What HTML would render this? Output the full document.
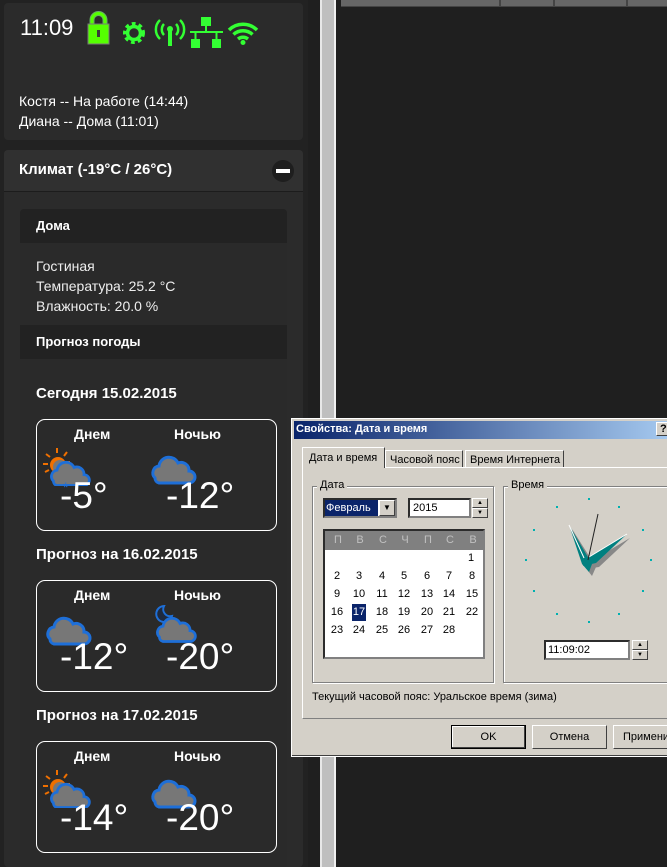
<!DOCTYPE html>
<html><head><meta charset="utf-8"><style>
*{margin:0;padding:0;box-sizing:border-box}
body{width:667px;height:867px;background:#1f1f1f;position:relative;overflow:hidden;font-family:"Liberation Sans",sans-serif;color:#fff}
.a{position:absolute}
.w{font-family:"Liberation Sans",sans-serif;font-size:11px;color:#000}
.bx{border:1px solid #fff;border-radius:9px}
.fc{font-weight:bold;font-size:15px}
.dl{font-weight:bold;font-size:14px}
.tp{font-size:37px}
.cal span{position:absolute;width:20px;text-align:center;font-size:11px}
.btn{background:#d4d0c8;border:1px solid #fff;border-right-color:#404040;border-bottom-color:#404040}
</style></head><body>
<!-- left column -->
<div class="a" style="left:0;top:0;width:308px;height:867px;background:#222"></div>
<div class="a" style="left:4px;top:3px;width:299px;height:137px;background:#2b2b2b;border-radius:4px"></div>
<div class="a" style="left:20px;top:15px;font-size:22px">11:09</div>
<svg class="a" style="left:80px;top:10px" width="190" height="45" viewBox="80 10 190 45">
<path d="M92 24v-4a6.5 6.5 0 0 1 13 0v4" fill="none" stroke="#6a6" stroke-width="5"/>
<path d="M92 24v-4a6.5 6.5 0 0 1 13 0v4" fill="none" stroke="#5f0" stroke-width="3"/>
<rect x="88" y="24" width="21" height="20" fill="#5f0" stroke="#777" stroke-width="1"/>
<rect x="97" y="30" width="3" height="7" fill="#3a3a3a"/>
<g fill="#3f3" stroke="#3f3">
<circle cx="134" cy="33" r="8.5" fill="none" stroke-width="5" stroke-dasharray="3.4 2.9"/>
<circle cx="134" cy="33" r="6.5" fill="none" stroke-width="3.5"/>
<path d="M170 31v15" stroke-width="4"/>
<circle cx="170" cy="29" r="3" stroke="none"/>
<path d="M164 24a8 8 0 0 0 0 11M176 24a8 8 0 0 1 0 11M160 20a13 13 0 0 0 0 19M180 20a13 13 0 0 1 0 19" fill="none" stroke-width="2.5"/>
<rect x="201" y="17" width="10" height="9" stroke="none"/>
<rect x="191" y="39" width="9" height="9" stroke="none"/>
<rect x="212" y="39" width="9" height="9" stroke="none"/>
<path d="M206 26v6M190 32h33M195.5 32v7M216.5 32v7" fill="none" stroke-width="2"/>
<path d="M229 30a20 20 0 0 1 28 0M233.5 34.5a14 14 0 0 1 19 0M238 39a8 8 0 0 1 10 0" fill="none" stroke-width="3.5"/>
<circle cx="243" cy="42.5" r="2.5" stroke="none"/>
</g></svg>
<div class="a" style="left:19px;top:91px;font-size:14px;line-height:20px">Костя -- На работе (14:44)<br>Диана -- Дома (11:01)</div>
<div class="a" style="left:4px;top:150px;width:299px;height:717px;background:#2b2b2b;border-radius:4px"></div>
<div class="a" style="left:4px;top:150px;width:299px;height:42px;background:#303030;border-bottom:1px solid #1c1c1c;border-radius:4px 4px 0 0"></div>
<div class="a" style="left:19px;top:161px;font-weight:bold;font-size:15px">Климат (-19°C / 26°C)</div>
<div class="a" style="left:272px;top:160px;width:22px;height:22px;border-radius:50%;background:#1e1e1e"></div>
<div class="a" style="left:276px;top:169px;width:14px;height:4px;background:#fff"></div>
<div class="a" style="left:20px;top:209px;width:267px;height:658px;background:#2a2a2a;border-radius:4px"></div>
<div class="a" style="left:20px;top:209px;width:267px;height:34px;background:#222;border-radius:4px 4px 0 0"></div>
<div class="a" style="left:36px;top:218px;font-weight:bold;font-size:13px">Дома</div>
<div class="a" style="left:36px;top:256px;font-size:14px;line-height:20px;color:#eee">Гостиная<br>Температура: 25.2 °C<br>Влажность: 20.0 %</div>
<div class="a" style="left:20px;top:325px;width:267px;height:34px;background:#222"></div>
<div class="a" style="left:36px;top:334px;font-weight:bold;font-size:13px">Прогноз погоды</div>

<svg width="0" height="0" style="position:absolute"><defs>
<g id="cl"><path d="M6 30a7 7 0 0 1 4-12a10 10 0 0 1 19-3a8 8 0 0 1 11 8a6 6 0 0 1 0 12h-30a5 5 0 0 1-4-5z" fill="#777" stroke="#1e6fd8" stroke-width="3"/></g>
<g id="sn"><g stroke="#f07000" stroke-width="2"><path d="M4 12h-5M6 5l-4-3M13 1v-5M20 4l3-4M22 10h4M5 18l-4 2"/></g><circle cx="14" cy="13" r="8" fill="#f07000"/><circle cx="16" cy="15" r="7" fill="#777"/></g>
</defs></svg>

<div class="a" style="left:36px;top:385px"><span class="fc">Сегодня 15.02.2015</span></div>
<div class="a bx" style="left:36px;top:419px;width:241px;height:112px"></div>
<div class="a dl" style="left:74px;top:426px">Днем</div>
<div class="a dl" style="left:174px;top:426px">Ночью</div>
<svg class="a" style="left:42px;top:446px" width="50" height="40" viewBox="-2 -6 50 40"><use href="#sn"/><use href="#cl" transform="translate(4,2) scale(0.9)"/></svg>
<div class="a" style="left:63px;top:479px;color:#1e6fd8;font-size:14px">*</div>
<svg class="a" style="left:145px;top:448px" width="52" height="38" viewBox="0 0 44 38"><use href="#cl"/></svg>
<div class="a tp" style="left:60px;top:475px">-5°</div>
<div class="a tp" style="left:166px;top:475px">-12°</div>

<div class="a" style="left:36px;top:546px"><span class="fc">Прогноз на 16.02.2015</span></div>
<div class="a bx" style="left:36px;top:580px;width:241px;height:112px"></div>
<div class="a dl" style="left:74px;top:587px">Днем</div>
<div class="a dl" style="left:174px;top:587px">Ночью</div>
<svg class="a" style="left:40px;top:609px" width="52" height="38" viewBox="0 0 44 38"><use href="#cl"/></svg>
<svg class="a" style="left:146px;top:604px" width="52" height="40" viewBox="0 -4 44 40"><path d="M14 -2a8 8 0 1 0 8 10a7 7 0 0 1-8-10z" fill="#1e2a40" stroke="#1e6fd8" stroke-width="2"/><use href="#cl" transform="translate(4,2) scale(0.9)"/></svg>
<div class="a tp" style="left:60px;top:636px">-12°</div>
<div class="a tp" style="left:166px;top:636px">-20°</div>

<div class="a" style="left:36px;top:707px"><span class="fc">Прогноз на 17.02.2015</span></div>
<div class="a bx" style="left:36px;top:741px;width:241px;height:112px"></div>
<div class="a dl" style="left:74px;top:748px">Днем</div>
<div class="a dl" style="left:174px;top:748px">Ночью</div>
<svg class="a" style="left:42px;top:768px" width="50" height="40" viewBox="-2 -6 50 40"><use href="#sn"/><use href="#cl" transform="translate(4,2) scale(0.9)"/></svg>
<svg class="a" style="left:145px;top:772px" width="52" height="38" viewBox="0 0 44 38"><use href="#cl"/></svg>
<div class="a tp" style="left:60px;top:797px">-14°</div>
<div class="a tp" style="left:166px;top:797px">-20°</div>

<!-- right side -->
<div class="a" style="left:320px;top:0;width:2px;height:867px;background:#e8e8e8"></div>
<div class="a" style="left:322px;top:0;width:12px;height:867px;background:#bfbfbf"></div>
<div class="a" style="left:334px;top:0;width:2px;height:867px;background:#f0f0f0"></div>
<div class="a" style="left:341px;top:0;width:326px;height:7px;background:#666;border-bottom:1px solid #444"></div>
<div class="a" style="left:499px;top:0;width:2px;height:7px;background:#444"></div>
<div class="a" style="left:553px;top:0;width:2px;height:7px;background:#444"></div>
<div class="a" style="left:626px;top:0;width:2px;height:7px;background:#444"></div>

<!-- dialog -->
<div class="a w" style="left:291px;top:418px;width:380px;height:339px;background:#d4d0c8;border:1px solid #fff;border-right:none;box-shadow:inset -1px -1px #404040">
<div class="a" style="left:2px;top:2px;right:0;height:18px;background:linear-gradient(90deg,#0a246a,#a6caf0)"></div>
<div class="a" style="left:4px;top:4px;color:#fff;font-weight:bold;font-size:11px">Свойства: Дата и время</div>
<div class="a btn" style="left:364px;top:3px;width:16px;height:14px;font-weight:bold;padding-left:3px">?</div>
<div class="a" style="left:10px;top:48px;width:370px;height:252px;border:1px solid #fff;border-right:none;border-bottom-color:#808080"></div>
<div class="a" style="left:10px;top:28px;width:83px;height:21px;background:#d4d0c8;border:1px solid #fff;border-bottom:none;border-right-color:#404040;padding:4px 0 0 6px;white-space:nowrap">Дата и время</div>
<div class="a" style="left:93px;top:31px;width:78px;height:17px;border:1px solid #fff;border-bottom:none;border-right-color:#404040;padding:3px 0 0 4px;white-space:nowrap">Часовой пояс</div>
<div class="a" style="left:173px;top:31px;width:99px;height:17px;border:1px solid #fff;border-bottom:none;border-right-color:#404040;padding:3px 0 0 4px;white-space:nowrap">Время Интернета</div>
<!-- date group -->
<div class="a" style="left:20px;top:67px;width:182px;height:197px;border:1px solid #808080;box-shadow:1px 1px #fff, inset 1px 1px #fff"></div>
<div class="a" style="left:25px;top:60px;background:#d4d0c8;padding:0 3px">Дата</div>
<div class="a" style="left:31px;top:79px;width:74px;height:20px;background:#fff;border:2px inset #808080"></div>
<div class="a" style="left:33px;top:81px;width:53px;height:16px;background:#0a246a;color:#fff;padding:2px 0 0 1px">Февраль</div>
<div class="a btn" style="left:87px;top:81px;width:16px;height:16px;font-size:8px;text-align:center;line-height:14px">▼</div>
<div class="a" style="left:116px;top:79px;width:63px;height:20px;background:#fff;border:2px inset #808080;padding:2px 0 0 3px">2015</div>
<div class="a btn" style="left:180px;top:79px;width:16px;height:10px;font-size:6px;text-align:center;line-height:8px">▲</div>
<div class="a btn" style="left:180px;top:89px;width:16px;height:10px;font-size:6px;text-align:center;line-height:8px">▼</div>
<div class="a cal" style="left:31px;top:110px;width:162px;height:130px;background:#fff;border:2px inset #808080">
<div class="a" style="left:0;top:0;width:158px;height:19px;background:#808080"></div>
<span style="left:3px;top:3px;color:#c0c0c0">П</span><span style="left:25px;top:3px;color:#c0c0c0">В</span><span style="left:48px;top:3px;color:#c0c0c0">С</span><span style="left:70px;top:3px;color:#c0c0c0">Ч</span><span style="left:93px;top:3px;color:#c0c0c0">П</span><span style="left:115px;top:3px;color:#c0c0c0">С</span><span style="left:138px;top:3px;color:#c0c0c0">В</span>
<span style="left:136px;top:21px">1</span>
<span style="left:2px;top:39px">2</span><span style="left:24px;top:39px">3</span><span style="left:47px;top:39px">4</span><span style="left:69px;top:39px">5</span><span style="left:92px;top:39px">6</span><span style="left:114px;top:39px">7</span><span style="left:137px;top:39px">8</span>
<span style="left:2px;top:57px">9</span><span style="left:24px;top:57px">10</span><span style="left:47px;top:57px">11</span><span style="left:69px;top:57px">12</span><span style="left:92px;top:57px">13</span><span style="left:114px;top:57px">14</span><span style="left:137px;top:57px">15</span>
<span style="left:2px;top:75px">16</span><span style="left:27px;top:73px;width:14px;height:17px;background:#0a246a;color:#fff;padding-top:2px">17</span><span style="left:47px;top:75px">18</span><span style="left:69px;top:75px">19</span><span style="left:92px;top:75px">20</span><span style="left:114px;top:75px">21</span><span style="left:137px;top:75px">22</span>
<span style="left:2px;top:93px">23</span><span style="left:24px;top:93px">24</span><span style="left:47px;top:93px">25</span><span style="left:69px;top:93px">26</span><span style="left:92px;top:93px">27</span><span style="left:114px;top:93px">28</span>
</div>
<!-- time group -->
<div class="a" style="left:211px;top:67px;width:180px;height:197px;border:1px solid #808080;box-shadow:1px 1px #fff, inset 1px 1px #fff"></div>
<div class="a" style="left:216px;top:60px;background:#d4d0c8;padding:0 3px">Время</div>
<svg class="a" style="left:209px;top:72px" width="160" height="150" viewBox="209 72 160 150">
<g fill="#00b0b0"><rect x="296" y="79" width="2" height="2"/><rect x="326" y="87" width="2" height="2"/><rect x="350" y="110" width="2" height="2"/><rect x="358" y="140" width="2" height="2"/><rect x="350" y="171" width="2" height="2"/><rect x="326" y="194" width="2" height="2"/><rect x="296" y="202" width="2" height="2"/><rect x="264" y="194" width="2" height="2"/><rect x="241" y="171" width="2" height="2"/><rect x="233" y="140" width="2" height="2"/><rect x="241" y="110" width="2" height="2"/><rect x="264" y="87" width="2" height="2"/></g>
<path d="M278 108L302 146L298 155L291 146Z" fill="#888" transform="translate(2,2)"/>
<path d="M336 117L299 139L292 148L305 146Z" fill="#888" transform="translate(2,2)"/>
<path d="M277 106L300 145L297 153L290 145Z" fill="#008080"/>
<path d="M277 106L292 139" stroke="#fff" stroke-width="1"/>
<path d="M335 115L297 138L291 147L304 144Z" fill="#008080"/>
<path d="M335 115L297 138" stroke="#fff" stroke-width="1"/>
<path d="M296 141L306 95" stroke="#222" stroke-width="1"/>
</svg>
<div class="a" style="left:252px;top:221px;width:86px;height:20px;background:#fff;border:2px inset #808080;padding:2px 0 0 2px">11:09:02</div>
<div class="a btn" style="left:340px;top:221px;width:16px;height:10px;font-size:6px;text-align:center;line-height:8px">▲</div>
<div class="a btn" style="left:340px;top:231px;width:16px;height:10px;font-size:6px;text-align:center;line-height:8px">▼</div>
<div class="a" style="left:20px;top:272px">Текущий часовой пояс: Уральское время (зима)</div>
<div class="a" style="left:159px;top:306px;width:75px;height:24px;border:1px solid #000;box-shadow:inset -1px -1px #404040,inset 1px 1px #fff;text-align:center;line-height:22px">OK</div>
<div class="a btn" style="left:240px;top:306px;width:75px;height:24px;text-align:center;line-height:22px">Отмена</div>
<div class="a btn" style="left:321px;top:306px;width:75px;height:24px;line-height:22px;padding-left:9px;white-space:nowrap">Применить</div>
</div>
</body></html>
